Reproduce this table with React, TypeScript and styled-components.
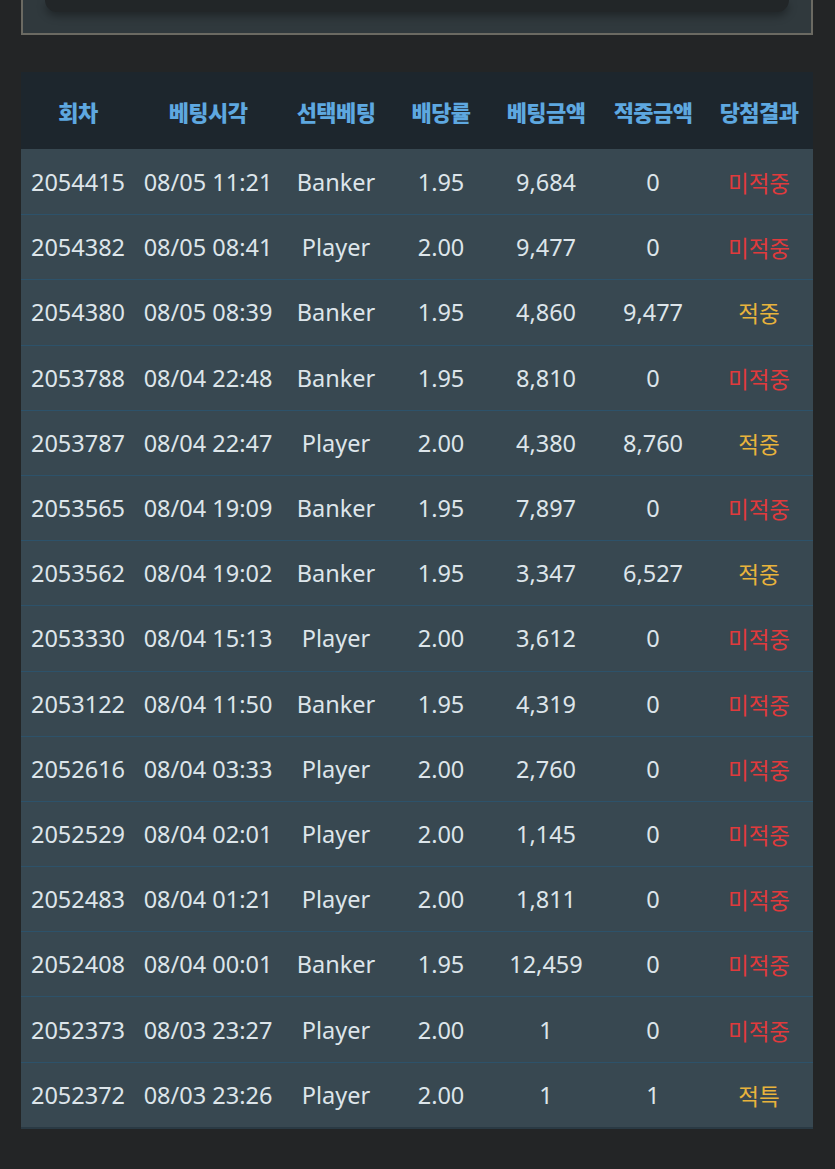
import React from "react";
import styled, { createGlobalStyle } from "styled-components";

const Global = createGlobalStyle`
  html, body { margin: 0; padding: 0; background: #232526; }
  body { font-family: "Noto Sans", "Noto Sans CJK KR", sans-serif; }
`;

const Page = styled.div`
  width: 835px;
  min-height: 1169px;
  background: #232526;
  padding: 0 22px 0 21px;
  box-sizing: border-box;
  display: flex;
  flex-direction: column;
`;

const TopPanel = styled.div`
  height: 35px;
  box-sizing: border-box;
  background: #30393d;
  border: 2px solid #6b6a62;
  border-top: none;
  padding: 0 22px;
`;

const InnerCard = styled.div`
  height: 12px;
  background: #222628;
  border-radius: 0 0 12px 12px;
  box-shadow: 0 4px 8px rgba(0, 0, 0, 0.35);
`;

const Table = styled.div`
  margin-top: 37px;
  display: flex;
  flex-direction: column;
  border-bottom: 2px solid #2a3a44;
`;

const cols = "114px 146px 110px 100px 110px 104px 108px";

const HeaderRow = styled.div`
  display: grid;
  grid-template-columns: ${cols};
  height: 77px;
  align-items: center;
  background: #1d262d;
`;

const HeadCell = styled.div`
  text-align: center;
  font-family: "Noto Sans CJK KR", sans-serif;
  font-weight: 900;
  font-size: 22px;
  color: #5ea8e0;
  letter-spacing: -0.6px;
  white-space: nowrap;
`;

const Row = styled.div<{ $first?: boolean }>`
  display: grid;
  grid-template-columns: ${cols};
  height: 65.2px;
  box-sizing: border-box;
  align-items: center;
  background: #384851;
  border-top: ${(p) => (p.$first ? "none" : "1.5px solid #2d526a")};
`;

const Cell = styled.div`
  text-align: center;
  font-family: "Noto Sans", "Noto Sans CJK KR", sans-serif;
  font-size: 23.5px;
  color: #dde5ea;
  white-space: nowrap;
`;

const ResultCell = styled.div<{ $win: boolean }>`
  text-align: center;
  font-family: "Noto Sans CJK KR", sans-serif;
  font-size: 22.5px;
  color: ${(p) => (p.$win ? "#e8b33c" : "#e03a3c")};
  white-space: nowrap;
`;

type Bet = [string, string, string, string, string, string, string];

const rows: Bet[] = [
  ["2054415", "08/05 11:21", "Banker", "1.95", "9,684", "0", "미적중"],
  ["2054382", "08/05 08:41", "Player", "2.00", "9,477", "0", "미적중"],
  ["2054380", "08/05 08:39", "Banker", "1.95", "4,860", "9,477", "적중"],
  ["2053788", "08/04 22:48", "Banker", "1.95", "8,810", "0", "미적중"],
  ["2053787", "08/04 22:47", "Player", "2.00", "4,380", "8,760", "적중"],
  ["2053565", "08/04 19:09", "Banker", "1.95", "7,897", "0", "미적중"],
  ["2053562", "08/04 19:02", "Banker", "1.95", "3,347", "6,527", "적중"],
  ["2053330", "08/04 15:13", "Player", "2.00", "3,612", "0", "미적중"],
  ["2053122", "08/04 11:50", "Banker", "1.95", "4,319", "0", "미적중"],
  ["2052616", "08/04 03:33", "Player", "2.00", "2,760", "0", "미적중"],
  ["2052529", "08/04 02:01", "Player", "2.00", "1,145", "0", "미적중"],
  ["2052483", "08/04 01:21", "Player", "2.00", "1,811", "0", "미적중"],
  ["2052408", "08/04 00:01", "Banker", "1.95", "12,459", "0", "미적중"],
  ["2052373", "08/03 23:27", "Player", "2.00", "1", "0", "미적중"],
  ["2052372", "08/03 23:26", "Player", "2.00", "1", "1", "적특"],
];

const headers = ["회차", "베팅시각", "선택베팅", "배당률", "베팅금액", "적중금액", "당첨결과"];

export default function App() {
  return (
    <>
      <Global />
      <Page>
        <TopPanel>
          <InnerCard />
        </TopPanel>
        <Table>
          <HeaderRow>
            {headers.map((h) => (
              <HeadCell key={h}>{h}</HeadCell>
            ))}
          </HeaderRow>
          {rows.map((r, i) => (
            <Row key={r[0]} $first={i === 0}>
              {r.slice(0, 6).map((c, j) => (
                <Cell key={j}>{c}</Cell>
              ))}
              <ResultCell $win={r[6] !== "미적중"}>{r[6]}</ResultCell>
            </Row>
          ))}
        </Table>
      </Page>
    </>
  );
}
